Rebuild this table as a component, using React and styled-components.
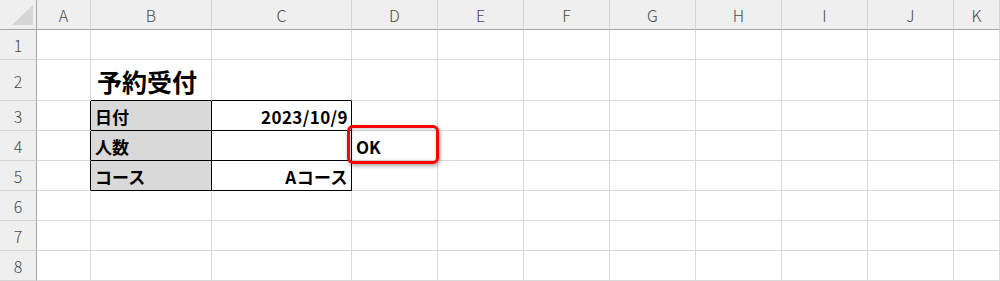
import React from "react";
import styled, { createGlobalStyle } from "styled-components";

const GlobalStyle = createGlobalStyle`
  html, body {
    margin: 0;
    padding: 0;
    background: #ffffff;
  }
  body {
    font-family: "Noto Sans CJK JP", "Noto Sans", sans-serif;
  }
`;

const COLS = ["A", "B", "C", "D", "E", "F", "G", "H", "I", "J", "K"];
const GRID = "#dadada";
const HEAD_EDGE = "#a6a6a6";
const INK = "#000000";

const Sheet = styled.div`
  display: grid;
  grid-template-columns: 37px 54px 121px 140px repeat(7, 86px) 1fr;
  grid-template-rows: 30px 30px 41px repeat(6, 30px);
  width: 1000px;
  height: 281px;
  overflow: hidden;
  background: #fff;
`;

const Corner = styled.div`
  position: relative;
  background: #efefef;
  border-right: 1px solid ${HEAD_EDGE};
  border-bottom: 1px solid ${HEAD_EDGE};
  box-sizing: border-box;
`;

const CornerMark = styled.div`
  position: absolute;
  right: 3px;
  bottom: 4px;
  width: 0;
  height: 0;
  border-left: 21px solid transparent;
  border-bottom: 20px solid #d6d6d6;
`;

const ColHeader = styled.div`
  display: flex;
  align-items: center;
  justify-content: center;
  background: #efefef;
  border-right: 1px solid #d4d4d4;
  border-bottom: 1px solid ${HEAD_EDGE};
  box-sizing: border-box;
  color: #4a4a4a;
  font-size: 16px;
  font-weight: 300;
  padding-top: 1px;
`;

const RowHeader = styled.div`
  display: flex;
  align-items: center;
  justify-content: center;
  background: #efefef;
  border-right: 1px solid ${HEAD_EDGE};
  border-bottom: 1px solid #d4d4d4;
  box-sizing: border-box;
  color: #4a4a4a;
  font-size: 16px;
  font-weight: 300;
  padding-top: 1px;
`;

const Cell = styled.div`
  position: relative;
  z-index: ${(p) => (p.$raised ? 2 : "auto")};
  display: flex;
  align-items: ${(p) => (p.$title ? "flex-end" : "center")};
  justify-content: ${(p) => (p.$align === "right" ? "flex-end" : "flex-start")};
  box-sizing: border-box;
  background: ${(p) => p.$bg || "#fff"};
  border-right: 1px solid ${(p) => (p.$inkRight ? INK : GRID)};
  border-bottom: 1px solid ${(p) => (p.$inkBottom ? INK : GRID)};
  padding: ${(p) => (p.$title ? "0 0 6px 6px" : "1px 3px 0 4px")};
  color: #000;
  font-weight: 700;
  font-size: ${(p) => (p.$title ? "25px" : "17px")};
  letter-spacing: ${(p) => (p.$align === "right" ? "0.4px" : "0")};
  line-height: 1;
  white-space: nowrap;
`;

const Callout = styled.div`
  position: absolute;
  left: -5px;
  top: -6px;
  width: 92px;
  height: 39px;
  box-sizing: border-box;
  border: 3px solid #ff0000;
  border-radius: 6px;
  box-shadow: 1px 2px 4px rgba(0, 0, 0, 0.35), inset 1px 1px 4px rgba(0, 0, 0, 0.22);
  pointer-events: none;
`;

const cells = {
  "B2": { text: "予約受付", title: true, inkBottom: true },
  "C2": { inkBottom: true },
  "A3": { inkRight: true },
  "A4": { inkRight: true },
  "A5": { inkRight: true },
  "B3": { text: "日付", bg: "#d9d9d9", inkRight: true, inkBottom: true },
  "C3": { text: "2023/10/9", align: "right", inkRight: true, inkBottom: true },
  "B4": { text: "人数", bg: "#d9d9d9", inkRight: true, inkBottom: true },
  "C4": { inkRight: true, inkBottom: true },
  "D4": { text: "OK", callout: true },
  "B5": { text: "コース", bg: "#d9d9d9", inkRight: true, inkBottom: true },
  "C5": { text: "Aコース", align: "right", inkRight: true, inkBottom: true },
};

export default function App() {
  const rows = [1, 2, 3, 4, 5, 6, 7, 8];
  return (
    <>
      <GlobalStyle />
      <Sheet>
        <Corner>
          <CornerMark />
        </Corner>
        {COLS.map((c) => (
          <ColHeader key={c}>{c}</ColHeader>
        ))}
        {rows.map((r) => (
          <React.Fragment key={r}>
            <RowHeader>{r}</RowHeader>
            {COLS.map((c) => {
              const d = cells[`${c}${r}`] || {};
              return (
                <Cell
                  key={c}
                  $title={d.title}
                  $align={d.align}
                  $bg={d.bg}
                  $inkRight={d.inkRight}
                  $inkBottom={d.inkBottom}
                  $raised={d.callout}
                >
                  {d.text}
                  {d.callout && <Callout />}
                </Cell>
              );
            })}
          </React.Fragment>
        ))}
      </Sheet>
    </>
  );
}
